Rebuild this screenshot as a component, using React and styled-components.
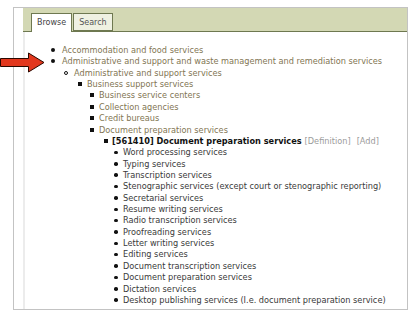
import React from "react";
import styled, { createGlobalStyle } from "styled-components";

const Global = createGlobalStyle`
  html, body { margin: 0; padding: 0; background: #fff; }
  body { font-family: "DejaVu Sans", Verdana, sans-serif; font-size: 8.2px; }
`;

const Page = styled.div`
  position: relative;
  width: 416px;
  height: 313px;
  padding: 7px 0 0 13px;
  box-sizing: border-box;
`;

const Frame = styled.div`
  width: 395px;
  height: 303px;
  box-sizing: border-box;
  border: 1px solid #c3c3c3;
  padding-left: 9px;
  display: flex;
  flex-direction: column;
`;

const Header = styled.div`
  height: 24px;
  box-sizing: border-box;
  background: #d3d8b4;
  border-bottom: 1px solid #6e7850;
  display: flex;
  align-items: flex-end;
  gap: 1px;
  padding-left: 8px;
`;

const Tab = styled.div`
  box-sizing: border-box;
  margin-bottom: ${(p) => (p.$active ? "-1px" : "0")};
  height: ${(p) => (p.$active ? "19px" : "18px")};
  padding: 0 5px;
  border: 1px solid #6e7850;
  border-bottom: ${(p) => (p.$active ? "none" : "1px solid #6e7850")};
  background: ${(p) => (p.$active ? "#ffffff" : "#eff1e2")};
  color: ${(p) => (p.$active ? "#444" : "#555")};
  font-size: 8px;
  line-height: 17px;
`;

const Body = styled.div`
  flex: 1;
  border-left: 2px solid #ececec;
  padding-top: 13px;
`;

const List = styled.ul`
  list-style: none;
  margin: 0;
  padding: 0 0 0 ${(p) => p.$indent}px;
`;

const Item = styled.li`
  line-height: 11.36px;
  white-space: nowrap;
  color: ${(p) => p.$color || "#827653"};
  &::before {
    content: "";
    display: inline-block;
    vertical-align: 1px;
    box-sizing: border-box;
    width: ${(p) => (p.$bullet === "small" ? 3.5 : 4)}px;
    height: ${(p) => (p.$bullet === "small" ? 3.5 : 4)}px;
    border-radius: ${(p) => (p.$bullet === "square" ? "0" : "50%")};
    background: ${(p) => (p.$bullet === "circle" ? "transparent" : "#111")};
    border: ${(p) => (p.$bullet === "circle" ? "1px solid #111" : "none")};
    margin-left: ${(p) => p.$ml}px;
    margin-right: ${(p) => p.$mr}px;
  }
`;

const Bold = styled.span`
  font-weight: bold;
  color: #111;
`;

const Action = styled.span`
  color: #9b9b9b;
  margin-left: ${(p) => p.$gap}px;
`;

const Arrow = styled.svg`
  position: absolute;
  left: 0;
  top: 52px;
`;

const leaves = [
  "Word processing services",
  "Typing services",
  "Transcription services",
  "Stenographic services (except court or stenographic reporting)",
  "Secretarial services",
  "Resume writing services",
  "Radio transcription services",
  "Proofreading services",
  "Letter writing services",
  "Editing services",
  "Document transcription services",
  "Document preparation services",
  "Dictation services",
  "Desktop publishing services (I.e. document preparation service)",
];

export default function App() {
  return (
    <>
      <Global />
      <Page>
        <Frame>
          <Header>
            <Tab $active>Browse</Tab>
            <Tab>Search</Tab>
          </Header>
          <Body>
            <List $indent={37}>
              <Item $bullet="disc" $ml={-11} $mr={7}>Accommodation and food services</Item>
              <Item $bullet="disc" $ml={-11} $mr={7}>
                Administrative and support and waste management and remediation services
                <List $indent={12}>
                  <Item $bullet="circle" $ml={-10} $mr={6}>
                    Administrative and support services
                    <List $indent={13}>
                      <Item $bullet="square" $ml={-9} $mr={5}>
                        Business support services
                        <List $indent={12}>
                          <Item $bullet="square" $ml={-9} $mr={5}>Business service centers</Item>
                          <Item $bullet="square" $ml={-9} $mr={5}>Collection agencies</Item>
                          <Item $bullet="square" $ml={-9} $mr={5}>Credit bureaus</Item>
                          <Item $bullet="square" $ml={-9} $mr={5}>
                            Document preparation services
                            <List $indent={13}>
                              <Item $bullet="square" $ml={-8} $mr={4}>
                                <Bold>[561410] Document preparation services</Bold>
                                <Action $gap={3}>[Definition]</Action>
                                <Action $gap={6}>[Add]</Action>
                                <List $indent={11}>
                                  {leaves.map((t) => (
                                    <Item key={t} $bullet="small" $ml={-9} $mr={5.5} $color="#3a3a3a">
                                      {t}
                                    </Item>
                                  ))}
                                </List>
                              </Item>
                            </List>
                          </Item>
                        </List>
                      </Item>
                    </List>
                  </Item>
                </List>
              </Item>
            </List>
          </Body>
        </Frame>
        <Arrow width="46" height="21" viewBox="0 0 46 21">
          <polygon
            points="0.5,6.5 28.5,6.5 28.5,1 44,10.5 28.5,20 28.5,14.5 0.5,14.5"
            fill="#e2371d"
            stroke="#2a0800"
            strokeWidth="1"
            strokeLinejoin="miter"
          />
        </Arrow>
      </Page>
    </>
  );
}
